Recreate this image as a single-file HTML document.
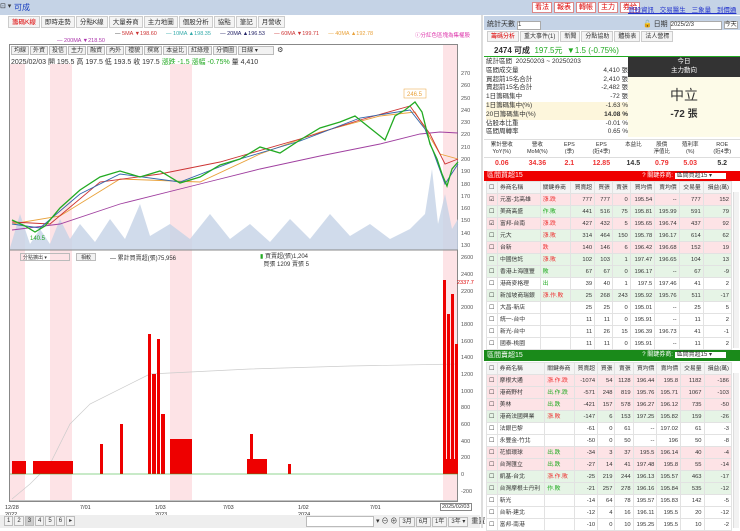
<!DOCTYPE html>
<html><head><meta charset="utf-8"><style>
*{margin:0;padding:0;box-sizing:border-box}
body{width:740px;height:528px;overflow:hidden;background:#fff;font-family:"Liberation Sans","Noto Sans CJK TC",sans-serif;font-size:7px;color:#333;position:relative}
.a{position:absolute}
.tab{display:inline-block;border:1px solid #ccc;background:#f4f4f4;padding:0 3px;height:12px;line-height:11px;margin-right:1px;font-size:6.5px}
.btn{display:inline-block;border:1px solid #bbb;background:#f2f2f2;padding:0 2px;height:9px;line-height:8px;font-size:6px;margin-right:1px}
table{border-collapse:collapse;width:100%}
tr{height:12px}
td{border:1px solid #e2e2e2;line-height:10px;font-size:5.8px;text-align:right;padding:0 2px;white-space:nowrap}
td.l{text-align:left}
.p{background:#fde3e6}.g{background:#e6f4e6}
.rb{display:inline-block;border:1px solid #d88;background:#fff;color:#d00;padding:0 2px;height:11px;line-height:10px;margin-right:2px;font-size:7px}
</style></head><body>
<div class="a" style="left:0;top:0;width:740px;height:15px;background:#c5d3e6"></div>
<div class="a" style="left:0;top:2px;font-size:7px">⊡ ▾</div>
<div class="a" style="left:14px;top:2px;color:#1a3fbf;font-size:8px">可成</div>
<div class="a" style="left:532px;top:2px"><span class="rb">看法</span><span class="rb">報表</span><span class="rb">轉帳</span><span class="rb">主力</span><span class="rb">券給</span></div>
<div class="a" style="left:628px;top:4px;color:#2233cc;font-size:6.5px;text-decoration:underline;word-spacing:4px">個股資訊 交易醫生 三象量 到價通知</div>
<div class="a" style="left:8px;top:16px"><span class="tab" style="color:#d00">籌碼K線</span><span class="tab">即時走勢</span><span class="tab">分點K線</span><span class="tab">大量券商</span><span class="tab">主力地圖</span><span class="tab">個股分析</span><span class="tab">協點</span><span class="tab">筆記</span><span class="tab">月營收</span></div>
<div class="a" style="left:115px;top:31px;font-size:5.5px;white-space:nowrap"><span style="color:#333">—</span> <span style="color:#c33">5MA ▼198.60</span>&nbsp;&nbsp;&nbsp;&nbsp;&nbsp;&nbsp;<span style="color:#3aa">— 10MA ▲198.35</span>&nbsp;&nbsp;&nbsp;&nbsp;&nbsp;&nbsp;<span style="color:#226">— 20MA ▲196.53</span>&nbsp;&nbsp;&nbsp;&nbsp;&nbsp;&nbsp;<span style="color:#c33">— 60MA ▼199.71</span>&nbsp;&nbsp;&nbsp;&nbsp;&nbsp;&nbsp;<span style="color:#e9a23b">— 40MA ▲192.78</span></div>
<div class="a" style="left:415px;top:31px;font-size:5.5px;color:#d3a">ⓘ分紅色區塊為集權股</div>
<div class="a" style="left:57px;top:38px;font-size:5.5px;color:#a3a">— 200MA ▼218.50</div>
<div class="a" style="left:9px;top:44px;width:449px;height:458px;border:1px solid #888"></div>
<div class="a" style="left:11px;top:46px"><span class="btn">均線</span><span class="btn">外資</span><span class="btn">投信</span><span class="btn">主力</span><span class="btn">融資</span><span class="btn">內外</span><span class="btn">禮貌</span><span class="btn">撰寫</span><span class="btn">本益比</span><span class="btn">紅綠燈</span><span class="btn">分價圖</span><span class="btn" style="width:36px">日線 ▾</span> ⚙</div>
<div class="a" style="left:11px;top:57px;font-size:7px">2025/02/03 開 195.5 高 197.5 低 193.5 收 197.5 <span style="color:#2a2">漲跌 -1.5 漲幅 -0.75%</span> 量 4,410</div>
<svg class="a" style="left:0;top:44px" width="480" height="472">
<g fill="#fde3e6"><rect x="10" y="20" width="15" height="436"/><rect x="50" y="20" width="22" height="436"/><rect x="170" y="20" width="22" height="436"/><rect x="443" y="1" width="14" height="455"/></g>
<g fill="#c4d2e6" opacity=".8"><path d="M10 204 L20 170 L30 200 L40 185 L50 200 L60 175 L70 195 L80 180 L95 198 L110 175 L125 195 L140 160 L150 192 L170 180 L190 195 L210 170 L230 195 L250 180 L270 198 L290 175 L310 195 L330 170 L350 192 L370 180 L390 195 L410 185 L425 170 L432 125 L438 180 L445 150 L452 185 L458 175 L458 206 L10 206Z"/></g>
<g fill="none" stroke-width=".9">
<polyline stroke="#a040a0" points="12,186 60,180 120,160 200,140 260,125 320,112 380,100 420,90 440,88 458,89"/>
<polyline stroke="#e9a23b" points="12,180 60,172 120,135 200,138 260,110 320,88 380,72 415,68 440,110 458,115"/>
<polyline stroke="#c33" points="12,178 50,180 100,138 160,130 220,118 300,95 360,76 410,62 430,90 445,120 458,115"/>
<polyline stroke="#36a" points="12,180 40,184 80,150 120,130 180,138 240,115 300,97 360,74 410,66 425,85 445,140 458,120"/>
<polyline stroke="#2a2" stroke-width="1.3" points="12,176 25,182 35,188 45,182 60,164 80,146 100,133 120,127 140,133 160,127 180,139 200,133 220,121 240,115 260,103 280,109 300,96 320,84 340,78 355,72 370,84 385,96 395,72 405,66 415,58 422,68 430,100 437,115 442,130 447,142 452,125 458,118"/>
</g>
<rect x="404" y="45" width="22" height="9" fill="#fff" stroke="#e9a23b" stroke-width=".5"/><text x="407" y="52" font-size="6" fill="#e9a23b">246.5</text>
<text x="30" y="196" font-size="6" fill="#2a2">140.5</text>
<line x1="10" y1="206" x2="458" y2="206" stroke="#888"/>
<g font-size="5.5" fill="#555"><text x="461" y="31">270</text><text x="461" y="43">260</text><text x="461" y="56">250</text><text x="461" y="68">240</text><text x="461" y="80">230</text><text x="461" y="92">220</text><text x="461" y="105">210</text><text x="461" y="117">200</text><text x="461" y="129">190</text><text x="461" y="142">180</text><text x="461" y="154">170</text><text x="461" y="166">160</text><text x="461" y="178">150</text><text x="461" y="191">140</text><text x="461" y="203">130</text>
<text x="461" y="215">2600</text><text x="461" y="232">2400</text><text x="457" y="240" fill="#d00">2337.7</text><text x="461" y="249">2200</text><text x="461" y="265">2000</text><text x="461" y="282">1800</text><text x="461" y="299">1600</text><text x="461" y="315">1400</text><text x="461" y="332">1200</text><text x="461" y="349">1000</text><text x="461" y="365">800</text><text x="461" y="382">600</text><text x="461" y="399">400</text><text x="461" y="415">200</text><text x="461" y="432">0</text><text x="461" y="449">-200</text></g>
<polyline fill="none" stroke="#ccc" stroke-width=".7" points="12,455 30,440 50,420 70,380 90,360 150,330 250,325 350,322 458,320"/>
<g fill="#e00"><rect x="12" y="417" width="14" height="13"/><rect x="33" y="417" width="40" height="13"/><rect x="148" y="290" width="3" height="140"/><rect x="152" y="330" width="4" height="100"/><rect x="157" y="295" width="3" height="135"/><rect x="161" y="370" width="4" height="60"/><rect x="170" y="395" width="22" height="35"/><rect x="120" y="380" width="3" height="50"/><rect x="100" y="400" width="3" height="30"/><rect x="250" y="390" width="3" height="40"/><rect x="247" y="415" width="20" height="15"/><rect x="288" y="420" width="3" height="10"/><rect x="443" y="236" width="3" height="194"/><rect x="447" y="270" width="3" height="160"/><rect x="451" y="250" width="3" height="180"/><rect x="455" y="300" width="3" height="130"/><rect x="443" y="415" width="15" height="15"/></g>
<line x1="10" y1="430" x2="458" y2="430" stroke="#2a2" stroke-width=".5"/>
<line x1="10" y1="457" x2="458" y2="457" stroke="#888"/>
</svg>
<div class="a" style="left:20px;top:253px;width:50px;height:8px;border:1px solid #bbb;font-size:5px;padding-left:2px">分點擴出 ▾</div>
<div class="a" style="left:76px;top:253px;width:20px;height:8px;border:1px solid #bbb;background:#f2f2f2;font-size:5px;text-align:center">相較</div>
<div class="a" style="left:110px;top:253px;font-size:6px">— 累計買賣超(張)75,956</div>
<div class="a" style="left:260px;top:253px;font-size:6px;line-height:8px"><span style="color:#2a2">▮</span> 買賣超(張)1,204<br>&nbsp;&nbsp;買張 1209 賣張 5</div>
<div class="a" style="left:5px;top:505px;font-size:5.5px;line-height:7px">12/28<br>2022</div>
<div class="a" style="left:80px;top:505px;font-size:5.5px">7/01</div>
<div class="a" style="left:155px;top:505px;font-size:5.5px;line-height:7px">1/03<br>2023</div>
<div class="a" style="left:223px;top:505px;font-size:5.5px">7/03</div>
<div class="a" style="left:298px;top:505px;font-size:5.5px;line-height:7px">1/02<br>2024</div>
<div class="a" style="left:370px;top:505px;font-size:5.5px">7/01</div>
<div class="a" style="left:440px;top:503px;font-size:5.5px;border:1px solid #888;background:#fff;padding:0 1px">2025/02/03</div>
<div class="a" style="left:0;top:515px;width:480px;height:13px;background:#eee"></div>
<div class="a" style="left:4px;top:516px;font-size:6px"><span class="btn" style="height:10px">1</span><span class="btn" style="height:10px">2</span><span class="btn" style="height:10px;background:#ccc">3</span><span class="btn" style="height:10px">4</span><span class="btn" style="height:10px">5</span><span class="btn" style="height:10px">6</span><span class="btn" style="height:10px">▸</span></div>
<div class="a" style="left:306px;top:516px;width:68px;height:11px;border:1px solid #bbb;background:#fff"></div>
<div class="a" style="left:376px;top:516px;font-size:7px">▾ ⊖ ⊕ <span class="btn" style="height:10px">3月</span><span class="btn" style="height:10px">6月</span><span class="btn" style="height:10px">1年</span><span class="btn" style="height:10px">3年 ▾</span> 重置</div>
<div class="a" style="left:481px;top:15px;width:2px;height:513px;background:#ddd"></div>
<div class="a" style="left:484px;top:16px;width:256px;height:14px;background:#c5d3e6"></div>
<div class="a" style="left:487px;top:19px;font-size:7px">統計天數 <span style="display:inline-block;width:24px;height:9px;border:1px solid #aaa;background:#fff;font-size:6px">1</span></div>
<div class="a" style="left:643px;top:19px;font-size:7px">🔓 日期 <span style="display:inline-block;width:52px;height:9px;border:1px solid #aaa;background:#fff;font-size:6px">2025/2/3</span> <span style="border:1px solid #aaa;background:#fff;font-size:6px">今天</span></div>
<div class="a" style="left:487px;top:31px"><span class="tab" style="color:#d00;height:11px;font-size:6px">籌碼分析</span><span class="tab" style="height:11px;font-size:6px">重大事件(1)</span><span class="tab" style="height:11px;font-size:6px">新聞</span><span class="tab" style="height:11px;font-size:6px">分點協助</span><span class="tab" style="height:11px;font-size:6px">體檢表</span><span class="tab" style="height:11px;font-size:6px">法人營標</span></div>
<div class="a" style="left:484px;top:43px;width:256px;height:14px;border-bottom:1.5px solid #2a2"></div>
<div class="a" style="left:494px;top:45px;font-size:8px;font-weight:bold">2474 可成 <span style="color:#2a2;font-weight:normal">&nbsp;197.5元&nbsp; ▼1.5 (-0.75%)</span></div>
<div class="a" style="left:486px;top:58px;width:142px;font-size:6.5px;line-height:8.8px">
<div>統計區間 &nbsp;20250203 ~ 20250203</div>
<div>區間成交量<span style="float:right">4,410 張</span></div>
<div>買超前15名合計<span style="float:right">2,410 張</span></div>
<div>賣超前15名合計<span style="float:right">-2,482 張</span></div>
<div>1日籌碼集中<span style="float:right">-72 張</span></div>
<div style="background:#fdf6dc">1日籌碼集中(%)<span style="float:right">-1.63 %</span></div>
<div style="background:#fdf6dc">20日籌碼集中(%)<span style="float:right;font-weight:bold">14.08 %</span></div>
<div>佔股本比重<span style="float:right">-0.01 %</span></div>
<div>區間周轉率<span style="float:right">0.65 %</span></div></div>
<div class="a" style="left:628px;top:57px;width:112px;height:20px;background:#333;color:#fff;text-align:center;font-size:6.5px;line-height:9px">今日<br>主力動向</div>
<div class="a" style="left:628px;top:77px;width:112px;height:60px;background:#fdfbe8;text-align:center"><div style="font-size:14px;margin-top:8px">中立</div><div style="font-size:10px;font-weight:bold">-72 張</div></div>
<div class="a" style="left:484px;top:139px;width:256px;font-size:5.5px;text-align:center;line-height:7px">
<div style="display:flex;border-top:1px solid #ddd;border-bottom:1px solid #ddd;height:19px;padding-top:2px"><div style="flex:1">累計營收<br>YoY(%)</div><div style="flex:1">營收<br>MoM(%)</div><div style="flex:.8">EPS<br>(季)</div><div style="flex:1">EPS<br>(近4季)</div><div style="flex:.8">本益比</div><div style="flex:.8">股價<br>淨值比</div><div style="flex:.8">殖利率<br>(%)</div><div style="flex:1">ROE<br>(近4季)</div></div>
<div style="display:flex;font-size:7px;font-weight:bold;line-height:11px;color:#e33"><div style="flex:1">0.06</div><div style="flex:1">34.36</div><div style="flex:.8">2.1</div><div style="flex:1">12.85</div><div style="flex:.8;color:#333">14.5</div><div style="flex:.8">0.79</div><div style="flex:.8">5.03</div><div style="flex:1;color:#333">5.2</div></div></div>
<div class="a" style="left:484px;top:171px;width:256px;height:10px;background:#e00;color:#fff;font-size:7px;padding-left:3px;line-height:10px">區間買超15<span style="float:right;font-size:6px;margin-right:14px">? 關鍵券商: <span style="background:#fff;color:#333;padding:0 14px 0 2px">區間買超15 ▾</span></span></div>
<div class="a" style="left:486px;top:181px;width:246px">
<table><tr style="background:#f4f4f4"><td class="l">☐</td><td class="l">券商名稱</td><td class="l">關鍵券商</td><td>買賣超</td><td>買張</td><td>賣張</td><td>買均價</td><td>賣均價</td><td>交易量</td><td>損益(萬)</td></tr>
<tr class="p"><td class="l">☑</td><td class="l">元富-北高雄</td><td class="l" style="color:#e33">漲.跌</td><td>777</td><td>777</td><td>0</td><td>195.54</td><td>--</td><td>777</td><td>152</td></tr>
<tr class="g"><td class="l">☐</td><td class="l">美商高盛</td><td class="l" style="color:#2a2">作.敗</td><td>441</td><td>516</td><td>75</td><td>195.81</td><td>195.99</td><td>591</td><td>79</td></tr>
<tr class="p"><td class="l">☑</td><td class="l">富邦-台南</td><td class="l" style="color:#e33">漲.跌</td><td>427</td><td>432</td><td>5</td><td>195.65</td><td>196.74</td><td>437</td><td>92</td></tr>
<tr class="g"><td class="l">☐</td><td class="l">元大</td><td class="l" style="color:#e33">漲.敗</td><td>314</td><td>464</td><td>150</td><td>195.78</td><td>196.17</td><td>614</td><td>62</td></tr>
<tr class="p"><td class="l">☐</td><td class="l">台新</td><td class="l" style="color:#e33">跌</td><td>140</td><td>146</td><td>6</td><td>196.42</td><td>196.68</td><td>152</td><td>19</td></tr>
<tr class="g"><td class="l">☐</td><td class="l">中國信託</td><td class="l" style="color:#e33">漲.敗</td><td>102</td><td>103</td><td>1</td><td>197.47</td><td>196.65</td><td>104</td><td>13</td></tr>
<tr class="g"><td class="l">☐</td><td class="l">香港上海匯豐</td><td class="l" style="color:#2a2">敗</td><td>67</td><td>67</td><td>0</td><td>196.17</td><td>--</td><td>67</td><td>-9</td></tr>
<tr><td class="l">☐</td><td class="l">港商麥格理</td><td class="l" style="color:#2a2">出</td><td>39</td><td>40</td><td>1</td><td>197.5</td><td>197.46</td><td>41</td><td>2</td></tr>
<tr class="g"><td class="l">☐</td><td class="l">新加坡商瑞銀</td><td class="l" style="color:#e33">漲.作.敗</td><td>25</td><td>268</td><td>243</td><td>195.92</td><td>195.76</td><td>511</td><td>-17</td></tr>
<tr><td class="l">☐</td><td class="l">大昌-新店</td><td></td><td>25</td><td>25</td><td>0</td><td>195.01</td><td>--</td><td>25</td><td>5</td></tr>
<tr><td class="l">☐</td><td class="l">統一-台中</td><td></td><td>11</td><td>11</td><td>0</td><td>195.91</td><td>--</td><td>11</td><td>2</td></tr>
<tr><td class="l">☐</td><td class="l">新光-台中</td><td></td><td>11</td><td>26</td><td>15</td><td>196.39</td><td>196.73</td><td>41</td><td>-1</td></tr>
<tr><td class="l">☐</td><td class="l">國泰-桃園</td><td></td><td>11</td><td>11</td><td>0</td><td>195.91</td><td>--</td><td>11</td><td>2</td></tr>
</table></div>
<div class="a" style="left:484px;top:350px;width:256px;height:11px;background:#1a8a1a;color:#fff;font-size:7px;padding-left:3px;line-height:11px">區間賣超15<span style="float:right;font-size:6px;margin-right:14px">? 關鍵券商: <span style="background:#fff;color:#333;padding:0 14px 0 2px">區間賣超15 ▾</span></span></div>
<div class="a" style="left:486px;top:362px;width:246px">
<table><tr style="background:#f4f4f4"><td class="l">☐</td><td class="l">券商名稱</td><td class="l">關鍵券商</td><td>買賣超</td><td>買張</td><td>賣張</td><td>買均價</td><td>賣均價</td><td>交易量</td><td>損益(萬)</td></tr>
<tr class="p"><td class="l">☐</td><td class="l">摩根大通</td><td class="l" style="color:#e33">漲.作.跌</td><td>-1074</td><td>54</td><td>1128</td><td>196.44</td><td>195.8</td><td>1182</td><td>-186</td></tr>
<tr class="p"><td class="l">☐</td><td class="l">港商野村</td><td class="l" style="color:#2a2">出.作.跌</td><td>-571</td><td>248</td><td>819</td><td>195.76</td><td>195.71</td><td>1067</td><td>-103</td></tr>
<tr class="p"><td class="l">☐</td><td class="l">美林</td><td class="l" style="color:#2a2">出.跌</td><td>-421</td><td>157</td><td>578</td><td>196.27</td><td>196.12</td><td>735</td><td>-50</td></tr>
<tr class="g"><td class="l">☐</td><td class="l">港商法國興業</td><td class="l" style="color:#e33">漲.敗</td><td>-147</td><td>6</td><td>153</td><td>197.25</td><td>195.82</td><td>159</td><td>-26</td></tr>
<tr><td class="l">☐</td><td class="l">法銀巴黎</td><td></td><td>-61</td><td>0</td><td>61</td><td>--</td><td>197.02</td><td>61</td><td>-3</td></tr>
<tr><td class="l">☐</td><td class="l">永豐金-竹北</td><td></td><td>-50</td><td>0</td><td>50</td><td>--</td><td>196</td><td>50</td><td>-8</td></tr>
<tr class="p"><td class="l">☐</td><td class="l">花旗環球</td><td class="l" style="color:#2a2">出.跌</td><td>-34</td><td>3</td><td>37</td><td>195.5</td><td>196.14</td><td>40</td><td>-4</td></tr>
<tr class="p"><td class="l">☐</td><td class="l">台灣匯立</td><td class="l" style="color:#2a2">出.跌</td><td>-27</td><td>14</td><td>41</td><td>197.48</td><td>195.8</td><td>55</td><td>-14</td></tr>
<tr class="g"><td class="l">☐</td><td class="l">凱基-台北</td><td class="l" style="color:#e33">漲.作.敗</td><td>-25</td><td>219</td><td>244</td><td>196.13</td><td>195.57</td><td>463</td><td>-17</td></tr>
<tr class="g"><td class="l">☐</td><td class="l">台灣摩根士丹利</td><td class="l" style="color:#2a2">作.敗</td><td>-21</td><td>257</td><td>278</td><td>196.16</td><td>195.84</td><td>535</td><td>-12</td></tr>
<tr><td class="l">☐</td><td class="l">新光</td><td></td><td>-14</td><td>64</td><td>78</td><td>195.57</td><td>195.83</td><td>142</td><td>-5</td></tr>
<tr><td class="l">☐</td><td class="l">台新-建北</td><td></td><td>-12</td><td>4</td><td>16</td><td>196.11</td><td>195.5</td><td>20</td><td>-12</td></tr>
<tr><td class="l">☐</td><td class="l">富邦-南港</td><td></td><td>-10</td><td>0</td><td>10</td><td>195.25</td><td>195.5</td><td>10</td><td>-2</td></tr>
</table></div>
<div class="a" style="left:733px;top:192px;width:6px;height:156px;background:#f2f2f2;border-left:1px solid #ddd"></div>
<div class="a" style="left:733px;top:373px;width:6px;height:155px;background:#f2f2f2;border-left:1px solid #ddd"></div>
</body></html>
